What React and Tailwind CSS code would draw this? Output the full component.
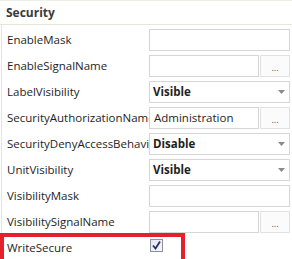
import React from "react";

const font = { fontFamily: '"Open Sans", "Noto Sans", sans-serif' };

function TextBox() {
  return <div className="h-[22px] w-[141px] border border-[#d6d6d6] bg-white" />;
}

function BrowseBox({ value }) {
  return (
    <div className="flex h-[22px] w-[141px] gap-[1px]">
      <div className="flex h-full w-[110px] items-center border border-[#d6d6d6] bg-white pl-[4px] text-[11.5px] text-[#1e1e1e]">
        {value}
      </div>
      <div className="flex h-full w-[30px] items-end justify-center border border-[#e2e2e2] bg-[#fbfbfb] pb-[3px] text-[9px] leading-[10px] text-[#555]">
        ...
      </div>
    </div>
  );
}

function Combo({ value }) {
  return (
    <div className="flex h-[22px] w-[141px] items-center justify-between border border-[#d6d6d6] bg-white pl-[3px] pr-[4px]">
      <span className="text-[11.5px] font-bold text-[#1e1e1e]">{value}</span>
      <svg width="7" height="4" viewBox="0 0 7 4">
        <path d="M0 0 L7 0 L3.5 4 Z" fill="#8a8a8a" />
      </svg>
    </div>
  );
}

function CheckBox() {
  return (
    <div className="ml-[1px] mt-[2px] flex h-[13px] w-[13px] items-center justify-center border border-[#8e8f9f] bg-gradient-to-br from-[#e4e4ec] to-[#f8f8fb]">
      <svg width="9" height="9" viewBox="0 0 9 9">
        <path d="M1 4.5 L3.5 7.5 L8 0.5" fill="none" stroke="#22306f" strokeWidth="1.8" />
      </svg>
    </div>
  );
}

const rows = [
  ["EnableMask", <TextBox />],
  ["EnableSignalName", <BrowseBox />],
  ["LabelVisibility", <Combo value="Visible" />],
  ["SecurityAuthorizationName", <BrowseBox value="Administration" />],
  ["SecurityDenyAccessBehavior", <Combo value="Disable" />],
  ["UnitVisibility", <Combo value="Visible" />],
  ["VisibilityMask", <TextBox />],
  ["VisibilitySignalName", <BrowseBox />],
  ["WriteSecure", <CheckBox />],
];

export default function App() {
  return (
    <div className="relative h-[259px] w-[292px] overflow-hidden bg-white" style={font}>
      <div className="flex h-[25px] items-center border-b border-[#e6e6da] border-t border-t-[#efefe6] pl-[6px] text-[12px] font-bold text-[#3a3a3a]">
        Security
      </div>
      <div className="ml-[1px] flex flex-col border-l border-[#e4e4e4] pt-[2px]">
        {rows.map(([label, editor]) => (
          <div key={label} className="flex h-[26px] items-start">
            <div className="h-[26px] w-[147px] overflow-hidden whitespace-nowrap pl-[5px] text-[11.5px] leading-[26px] text-[#1e1e1e]">
              {label}
            </div>
            <div className="pt-[2px]">{editor}</div>
          </div>
        ))}
      </div>
      <div className="pointer-events-none absolute left-0 top-[233px] h-[30px] w-[185px] border-[4px] border-[#e3202b]" />
    </div>
  );
}
